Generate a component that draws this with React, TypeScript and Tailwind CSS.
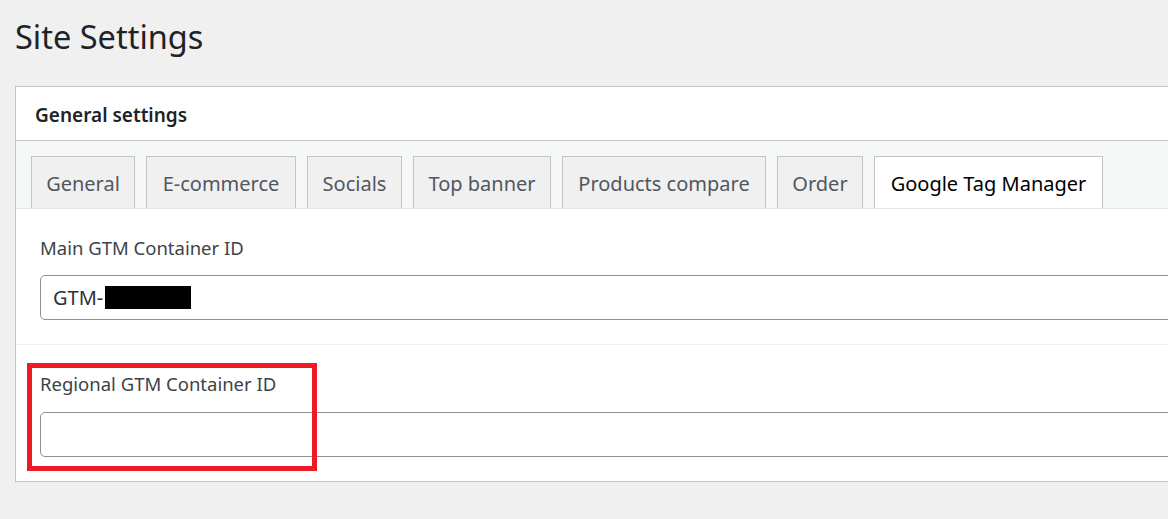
import React from "react";

const tabs: { label: string; w: string; active?: boolean }[] = [
  { label: "General", w: "w-[104px]" },
  { label: "E-commerce", w: "w-[150px]" },
  { label: "Socials", w: "w-[95px]" },
  { label: "Top banner", w: "w-[138px]" },
  { label: "Products compare", w: "w-[204px]" },
  { label: "Order", w: "w-[86px]" },
  { label: "Google Tag Manager", w: "w-[229px]", active: true },
];

export default function App() {
  return (
    <div
      className="relative w-[1168px] h-[519px] overflow-hidden bg-[#f0f0f1] text-[#1d2327]"
      style={{ fontFamily: '"Noto Sans", "Open Sans", sans-serif' }}
    >
      <h1 className="pl-[15px] pt-[14px] h-[86px] text-[32.5px] leading-[46px] text-[#1d2327]">
        Site Settings
      </h1>

      <div className="ml-[15px] w-[1200px] border border-[#c3c4c7] bg-white">
        <div className="h-[54px] flex items-center pl-[19px] pt-[3px] border-b border-[#c3c4c7] text-[19px] font-semibold text-[#1d2327]">
          General settings
        </div>

        <div className="bg-[#f6f7f7] pt-[15px] pl-[15px] flex gap-[11px] border-b border-[#e5e5e5]">
          {tabs.map((t) => (
            <div
              key={t.label}
              className={
                t.active
                  ? `${t.w} h-[52px] -mb-px pt-[2px] flex items-center justify-center border border-b-0 border-[#c3c4c7] bg-white text-[20px] text-[#000]`
                  : `${t.w} h-[52px] pt-[2px] flex items-center justify-center border border-b-0 border-[#c3c4c7] bg-[#f0f0f1] text-[20px] text-[#50575e]`
              }
            >
              {t.label}
            </div>
          ))}
        </div>

        <div className="pt-[25px] pb-[24px] pl-[24px] border-b border-[#f0f0f1]">
          <div className="text-[18.5px] leading-[27px] text-[#3c434a]">Main GTM Container ID</div>
          <div className="mt-[14px] h-[45px] border border-[#8c8f94] rounded-[5px] flex items-center pl-[12px] text-[20px] text-[#2c3338]">
            <span>GTM-</span>
            <span className="inline-block ml-[2px] w-[86px] h-[23px] bg-black"></span>
          </div>
        </div>

        <div className="pt-[25px] pb-[24px] pl-[24px]">
          <div className="text-[18.5px] leading-[27px] text-[#3c434a]">Regional GTM Container ID</div>
          <div className="mt-[15px] h-[45px] border border-[#8c8f94] rounded-[5px]"></div>
        </div>
      </div>

      <div className="absolute left-[27px] top-[363px] w-[290px] h-[108px] border-[5px] border-[#ed1c24] pointer-events-none"></div>
    </div>
  );
}
